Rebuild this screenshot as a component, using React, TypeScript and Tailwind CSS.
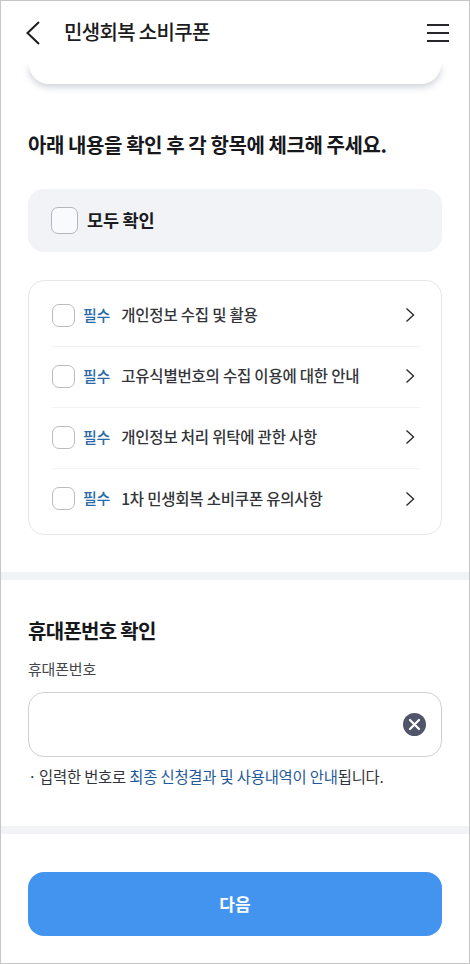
const font = { fontFamily: '"Noto Sans CJK KR", "Noto Sans", sans-serif' };

function Box({ big }: { big?: boolean }) {
  return (
    <span
      className={
        big
          ? "block w-[27px] h-[27px] shrink-0 rounded-[7px] border border-[#b4b6bb] bg-[#f9fafc]"
          : "block w-[23px] h-[23px] shrink-0 rounded-[7px] border border-[#b9bbc0] bg-white"
      }
    />
  );
}

const rows = [
  "개인정보 수집 및 활용",
  "고유식별번호의 수집 이용에 대한 안내",
  "개인정보 처리 위탁에 관한 사항",
  "1차 민생회복 소비쿠폰 유의사항",
];

export default function App() {
  return (
    <div
      style={font}
      className="w-[470px] h-[964px] overflow-hidden bg-white border border-[#c6c6c6] box-border flex flex-col text-[#1b1c20]"
    >
      <header className="relative z-10 bg-white h-[63px] shrink-0 flex items-center pl-[25px] pr-[20px]">
        <svg width="14" height="24" viewBox="0 0 14 24" fill="none" className="shrink-0">
          <path d="M13 1 L1.5 12 L13 23" stroke="#1b1c20" strokeWidth="2" />
        </svg>
        <h1 className="ml-[24px] mb-[2px] text-[20px] leading-none font-medium tracking-[-0.65px]">민생회복 소비쿠폰</h1>
        <svg width="22" height="18" viewBox="0 0 22 18" className="ml-auto shrink-0">
          <path d="M0 1 H22 M0 9 H22 M0 17 H22" stroke="#26272b" strokeWidth="1.8" />
        </svg>
      </header>

      <div className="mx-[28px] h-[20px] shrink-0 rounded-b-[20px] bg-white shadow-[0_3px_7px_rgba(90,100,125,0.3)]" />

      <h2 className="mx-[27px] mt-[48px] text-[20px] leading-[26px] font-bold tracking-[-0.42px] text-[#17181c]">
        아래 내용을 확인 후 각 항목에 체크해 주세요.
      </h2>

      <div className="mx-[27px] mt-[31px] h-[63px] shrink-0 rounded-[16px] bg-[#f2f3f7] flex items-center pl-[23px] gap-[9px]">
        <Box big />
        <span className="text-[17.5px] mb-[2px] font-bold leading-none tracking-[-0.2px]">모두 확인</span>
      </div>

      <div className="mx-[27px] mt-[28px] h-[255px] shrink-0 rounded-[16px] border border-[#e6e7ea] pl-[23px] pr-[21px] flex flex-col">
        {rows.map((r, i) => (
          <div
            key={r}
            className={
              i < 3
                ? "h-[62px] mt-[4px] mb-[-5px] pb-[1px] flex items-center border-b border-[#f0f1f3] shrink-0 pr-[5px]"
                : "h-[61px] mt-[4px] flex items-center shrink-0 pr-[5px]"
            }
          >
            <Box />
            <span className="ml-[8px] text-[15px] font-medium text-[#2b6aa8] tracking-[-0.2px]">필수</span>
            <span className="ml-[11px] text-[15.5px] font-medium text-[#33353a] tracking-[-0.2px]">{r}</span>
            <svg width="10" height="16" viewBox="0 0 10 16" fill="none" className="ml-auto shrink-0">
              <path d="M1.5 1.5 L8.5 8 L1.5 14.5" stroke="#2b2c30" strokeWidth="1.4" />
            </svg>
          </div>
        ))}
      </div>

      <div className="mt-[37px] h-[8px] shrink-0 bg-[#f2f3f7]" />

      <h2 className="mx-[27px] mt-[38px] text-[20px] leading-[26px] font-bold tracking-[-0.7px] text-[#17181c]">휴대폰번호 확인</h2>
      <div className="mx-[27px] mt-[15px] text-[15px] leading-[20px] text-[#44464b] tracking-[-0.2px]">휴대폰번호</div>

      <div className="mx-[27px] mt-[13px] h-[65px] shrink-0 rounded-[16px] border border-[#cfd0d4] flex items-center justify-end pr-[15px]">
        <svg width="23" height="23" viewBox="0 0 23 23">
          <circle cx="11.5" cy="11.5" r="11.5" fill="#51556a" />
          <path d="M7 7 L16 16 M16 7 L7 16" stroke="#fff" strokeWidth="2.2" strokeLinecap="round" />
        </svg>
      </div>

      <p className="mx-[27px] mt-[9px] text-[15.4px] leading-[20px] text-[#33353a] tracking-[-0.2px] flex">
        <span className="w-[11px]">·</span>
        <span>
          입력한 번호로 <span className="text-[#1f5a9c]">최종 신청결과 및 사용내역이 안내</span>됩니다.
        </span>
      </p>

      <div className="mt-[40px] h-[8px] shrink-0 bg-[#f2f3f7]" />

      <button className="mx-[27px] mt-[38px] h-[64px] shrink-0 rounded-[16px] bg-[#4394ef] text-white text-[17px] font-bold">
        다음
      </button>
    </div>
  );
}
